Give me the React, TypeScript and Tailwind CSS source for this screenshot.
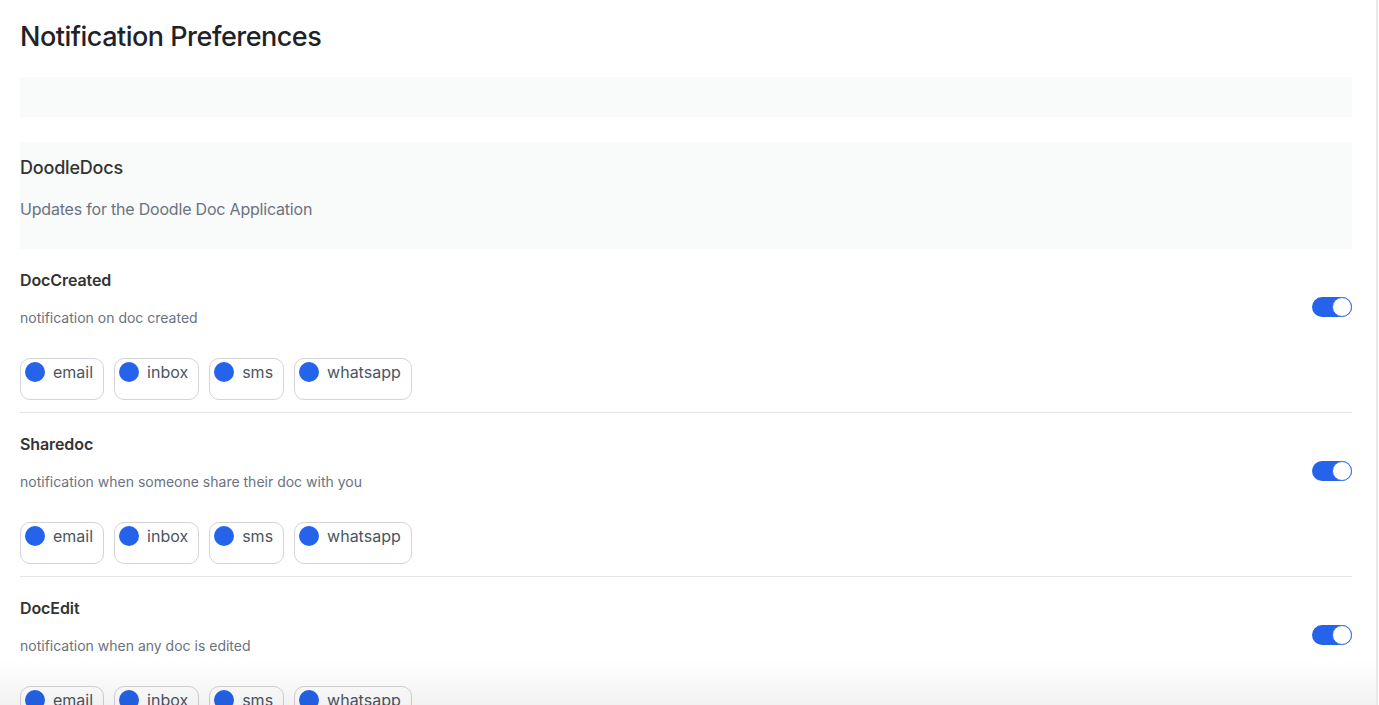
import React from "react";

const channels = ["email", "inbox", "sms", "whatsapp"];

const sections = [
  { title: "DocCreated", desc: "notification on doc created" },
  { title: "Sharedoc", desc: "notification when someone share their doc with you" },
  { title: "DocEdit", desc: "notification when any doc is edited" },
];

function Toggle() {
  return (
    <div className="mt-[29px] flex h-[20px] w-[40px] shrink-0 items-center justify-end rounded-full bg-[#2563eb]">
      <div className="h-[20px] w-[20px] rounded-full border border-[#3b6ff0] bg-white" />
    </div>
  );
}

function Chip({ label }: { label: string }) {
  return (
    <div className="flex h-[42px] items-start gap-2 rounded-[10px] border border-[#d4d4d8] pl-[4px] pr-[10px] pt-[3px]">
      <span className="h-[20px] w-[20px] shrink-0 rounded-full bg-[#2563eb]" />
      <span className="text-[16px] leading-[20px] text-[#4b5563]">{label}</span>
    </div>
  );
}

export default function App() {
  return (
    <div
      className="relative w-[1378px] min-h-[705px] border-r-2 border-[#e8e8e8] bg-white pl-[20px] pr-[24px]"
      style={{ fontFamily: "Inter, 'Liberation Sans', sans-serif" }}
    >
      <h1 className="pt-[19px] text-[27px] font-medium leading-[36px] tracking-[-0.5px] text-[#1f2328]">
        Notification Preferences
      </h1>
      <div className="mt-[22px] h-[40px] bg-[#f9fafa]" />
      <div className="mt-[25px] h-[107px] bg-[#f9fafa] pt-[13px]">
        <div className="text-[18px] font-medium leading-[26px] tracking-[-0.2px] text-[#333333]">DoodleDocs</div>
        <div className="mt-[16px] text-[16px] leading-[24px] tracking-[-0.2px] text-[#6b7280]">
          Updates for the Doodle Doc Application
        </div>
      </div>
      <div className="mt-[19px]">
        {sections.map((s, i) => (
          <div key={s.title}>
            {i > 0 && <div className="mt-[12px] mb-[19px] h-[1px] bg-[#e5e5e5]" />}
            <div className="flex items-start justify-between">
              <div>
                <div className="text-[16px] font-semibold leading-[24px] tracking-[-0.1px] text-[#333333]">
                  {s.title}
                </div>
                <div className="mt-[15px] text-[14px] leading-[22px] text-[#6b7280]">{s.desc}</div>
              </div>
              <Toggle />
            </div>
            <div className="mt-[29px] flex gap-[10px]">
              {channels.map((c) => (
                <Chip key={c} label={c} />
              ))}
            </div>
          </div>
        ))}
      </div>
      <div className="h-[60px]" />
      <div className="pointer-events-none fixed bottom-0 left-0 h-[45px] w-[1376px] bg-gradient-to-b from-transparent to-black/[0.05]" />
    </div>
  );
}
